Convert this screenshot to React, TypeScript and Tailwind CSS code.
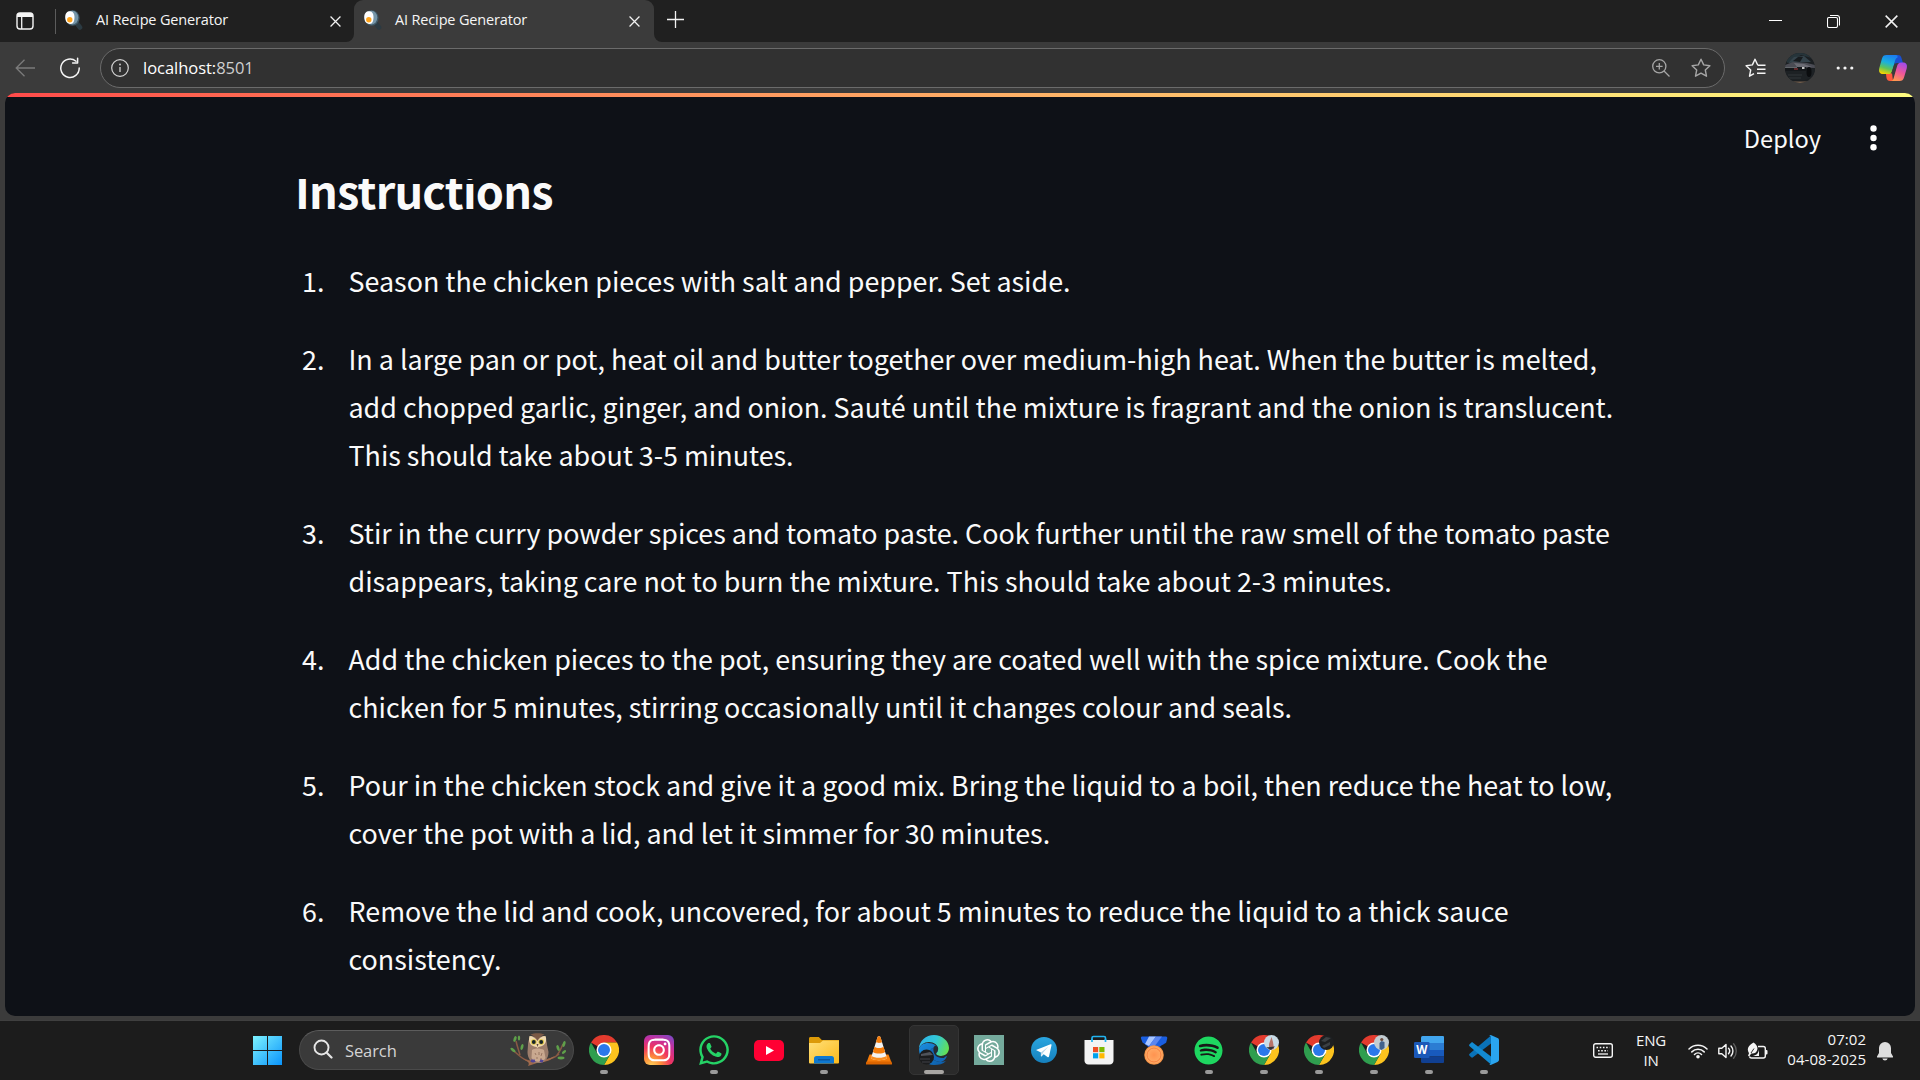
import React from "react";
import { FaSpotify, FaWhatsapp, FaInstagram } from "react-icons/fa";
import { SiOpenai } from "react-icons/si";

const steps: string[][] = [
  ["Season the chicken pieces with salt and pepper. Set aside."],
  [
    "In a large pan or pot, heat oil and butter together over medium-high heat. When the butter is melted,",
    "add chopped garlic, ginger, and onion. Sauté until the mixture is fragrant and the onion is translucent.",
    "This should take about 3-5 minutes.",
  ],
  [
    "Stir in the curry powder spices and tomato paste. Cook further until the raw smell of the tomato paste",
    "disappears, taking care not to burn the mixture. This should take about 2-3 minutes.",
  ],
  [
    "Add the chicken pieces to the pot, ensuring they are coated well with the spice mixture. Cook the",
    "chicken for 5 minutes, stirring occasionally until it changes colour and seals.",
  ],
  [
    "Pour in the chicken stock and give it a good mix. Bring the liquid to a boil, then reduce the heat to low,",
    "cover the pot with a lid, and let it simmer for 30 minutes.",
  ],
  [
    "Remove the lid and cook, uncovered, for about 5 minutes to reduce the liquid to a thick sauce",
    "consistency.",
  ],
];

function PanIcon() {
  return (
    <svg width="20" height="20" viewBox="0 0 20 20" className="block">
      <path d="M13 13.500L16 17.500" stroke="#2b3a42" strokeWidth="4.600" strokeLinecap="round" />
      <ellipse cx="8.600" cy="8" rx="7" ry="7.800" fill="#3f5967" />
      <ellipse cx="8.400" cy="7.600" rx="5.900" ry="6.900" fill="#7595a8" />
      <path d="M1.200 7C1.200 3 3.500 1 6.300 1.200C9.500 1.500 10.600 4 10.500 7C10.400 11 9.600 14 6.400 13.900C3 13.800 1.200 11 1.200 7Z" fill="#fff" />
      <circle cx="5.800" cy="9.800" r="2.700" fill="#ffa41c" />
    </svg>
  );
}

function CloseX({ size = 10 }: { size?: number }) {
  return (
    <svg width={size} height={size} viewBox="0 0 10 10" className="block">
      <path d="M.5.5l9 9M9.500.5l-9 9" stroke="#f2f2f2" strokeWidth="1.150" />
    </svg>
  );
}

function TabBar() {
  return (
    <div className="flex h-[42px] shrink-0 bg-[#202020] text-[#f5f5f5]">
      <div className="flex w-[55px] items-center pl-4">
        <svg width="18" height="18" viewBox="0 0 18 18" className="block">
          <rect x="1" y="1" width="16" height="16" rx="3" fill="none" stroke="#f5f5f5" strokeWidth="1.400" />
          <path d="M1 5V4a3 3 0 0 1 3-3h10a3 3 0 0 1 3 3v1z" fill="#f5f5f5" />
          <path d="M5.700 5v12" stroke="#f5f5f5" strokeWidth="1.300" />
        </svg>
      </div>
      <div className="mt-[9px] h-[25px] w-px bg-[#5c5c5c]" />
      <div className="flex w-[298px] items-center pb-[2px] pl-[8px]">
        <PanIcon />
        <span className="ml-[12px] flex-1 whitespace-nowrap text-[14.500px] leading-5 tracking-[-0.150px]">AI Recipe Generator</span>
        <div className="mr-[13px] pt-[3px]"><CloseX size={11} /></div>
      </div>
      <div className="relative flex w-[300px] items-center rounded-t-[9px] bg-[#3b3b3b] pb-[2px] pl-[9px]">
        <PanIcon />
        <span className="ml-[12px] flex-1 whitespace-nowrap text-[14.500px] leading-5 tracking-[-0.150px]">AI Recipe Generator</span>
        <div className="mr-[14px] pt-[3px]"><CloseX size={11} /></div>
        <svg className="absolute -left-2 bottom-0" width="8" height="8"><path d="M8 0v8H0a8 8 0 0 0 8-8z" fill="#3b3b3b" /></svg>
        <svg className="absolute -right-2 bottom-0" width="8" height="8"><path d="M0 0v8h8a8 8 0 0 1-8-8z" fill="#3b3b3b" /></svg>
      </div>
      <svg width="17" height="17" viewBox="0 0 17 17" className="ml-[13px] mt-[11px]">
        <path d="M8.500 0v17M0 8.500h17" stroke="#f2f2f2" strokeWidth="1.300" />
      </svg>
      <div className="ml-auto flex pr-[22px] pt-[15px]">
        <svg width="13" height="13" className="mr-[45px]"><path d="M0 5.500h13" stroke="#fff" /></svg>
        <svg width="13" height="13" viewBox="0 0 13 13" className="mr-[45px]">
          <path d="M3 .5h7a2.500 2.500 0 0 1 2.500 2.500v7.500" fill="none" stroke="#fff" strokeWidth="1.100" />
          <rect x=".5" y="2.500" width="10" height="10" rx="1.500" fill="none" stroke="#fff" strokeWidth="1.100" />
        </svg>
        <CloseX size={13} />
      </div>
    </div>
  );
}

const starPath = "M10 1.200l2.700 5.700 6.200.8-4.600 4.300 1.200 6.200L10 15.200l-5.500 3 1.200-6.200L1.100 7.700l6.200-.8z";

function CopilotIcon() {
  return (
    <svg width="30" height="28" viewBox="0 0 30 28" className="block">
      <defs>
        <linearGradient id="cpA" x1="0.600" y1="0" x2="0.300" y2="1">
          <stop offset="0" stopColor="#1b7ff0" /><stop offset=".4" stopColor="#19b0e0" /><stop offset=".7" stopColor="#5ec45a" /><stop offset="1" stopColor="#f5d400" />
        </linearGradient>
        <linearGradient id="cpB" x1="0.700" y1="0" x2="0.300" y2="1">
          <stop offset="0" stopColor="#a34be8" /><stop offset=".5" stopColor="#f0569a" /><stop offset="1" stopColor="#ff9a4d" />
        </linearGradient>
      </defs>
      <path d="M16 1h4c2 0 3 1 3.500 3l1.500 5h-5c-2 0-3 1-3.600 3z" fill="#1a4fd0" />
      <path d="M8 20l6-1 1 8h-3c-2 0-3-1-3.500-3z" fill="#ff5a3c" />
      <path d="M8.500 1h9c2 0 2.400 1 2 2.600C18.500 4 17.500 5 17 7L14 17.500c-.7 1.900-1.500 2.500-3.500 2.500H5C1.500 20 .5 17.500 1.300 14L4 4.500C4.700 2 6 1 8.500 1z" fill="url(#cpA)" />
      <path d="M21.500 27h-9c2 0 2.600-1 3.200-3l3.400-12c.7-2.200 1.800-3.500 4-3.500H25c3.500 0 4.500 2.500 3.700 6L26 23.500c-.7 2.500-2 3.500-4.500 3.500z" fill="url(#cpB)" />
      <path d="M16.600 9.500h2.800c-.5.700-.8 1.500-1 2.400l-2 7.500h-3.200z" fill="#3b3b3b" />
    </svg>
  );
}

function CarAvatar() {
  return (
    <svg width="30" height="30" viewBox="0 0 30 30" className="block">
      <defs><clipPath id="carc"><circle cx="15" cy="15" r="15" /></clipPath></defs>
      <g clipPath="url(#carc)">
        <rect width="30" height="30" fill="#1b1f22" />
        <path d="M0 0h30v6L16 2 2 10z" fill="#26343a" />
        <path d="M3 10L9 4l10-1 7 6z" fill="#34434b" />
        <path d="M8 8l5-4h5l-3 5z" fill="#171b1e" />
        <path d="M0 12l8-3 14 1 8 2v3l-30-1z" fill="#4b4c54" />
        <path d="M9 10l10 1 8 3H12z" fill="#6b6c74" />
        <rect x="0" y="14" width="21" height="4" fill="#15181b" />
        <path d="M0 14.500h12" stroke="#85898e" strokeWidth=".7" />
        <path d="M17 15h2.500" stroke="#fff" strokeWidth="1.400" />
        <path d="M9 16h4" stroke="#a8373a" strokeWidth="1" />
        <path d="M0 18h22l8-3v8l-10 4H0z" fill="#1d2124" />
        <ellipse cx="24" cy="19" rx="2.500" ry="5" fill="#0b0d0f" />
        <path d="M3 22h14M4 25h12" stroke="#33383c" strokeWidth=".9" />
        <path d="M4 28.500h22v2H4z" fill="#77614f" />
      </g>
    </svg>
  );
}

function Toolbar() {
  return (
    <div className="flex h-[51px] shrink-0 items-center bg-[#3b3b3b] pl-[15px] pr-[12px]">
      <svg width="20" height="18" viewBox="0 0 20 18"><path d="M9.500.8L1.200 9l8.300 8.200M1.200 9H20" fill="none" stroke="#7b7b7b" strokeWidth="1.300" /></svg>
      <svg width="22" height="22" viewBox="0 0 22 22" className="ml-[24px]">
        <path d="M17 4.200A9.200 9.200 0 1 0 20.200 11" fill="none" stroke="#f5f5f5" strokeWidth="1.500" strokeLinecap="round" />
        <path d="M18.600 1.200v4.900h-5" fill="none" stroke="#f5f5f5" strokeWidth="1.500" strokeLinecap="round" strokeLinejoin="round" />
      </svg>
      <div className="ml-[19px] flex h-[40px] w-[1625px] items-center rounded-full border border-[#6b6b6b] bg-[#313131] pl-[10px] pr-[13px]">
        <svg width="18" height="18" viewBox="0 0 18 18">
          <circle cx="9" cy="9" r="8.300" fill="none" stroke="#d4d4d4" strokeWidth="1.200" />
          <path d="M9 8v5" stroke="#d4d4d4" strokeWidth="1.300" /><circle cx="9" cy="5.500" r=".9" fill="#d4d4d4" />
        </svg>
        <span className="ml-[14px] flex-1 text-[16.500px] leading-6 tracking-[-0.030px] text-white">localhost:<span className="text-[#cfcfcf]">8501</span></span>
        <svg width="18" height="18" viewBox="0 0 18 18" className="mr-[21px]">
          <circle cx="7.300" cy="7.300" r="6.600" fill="none" stroke="#a6a6a6" strokeWidth="1.300" />
          <path d="M12 12l5.500 5.500M7.300 4v6.600M4 7.300h6.600" stroke="#a6a6a6" strokeWidth="1.300" />
        </svg>
        <svg width="20" height="20" viewBox="0 0 20 20"><path d={starPath} fill="none" stroke="#a6a6a6" strokeWidth="1.400" strokeLinejoin="round" /></svg>
      </div>
      <svg width="21" height="20" viewBox="0 0 21 20" className="ml-[20px]">
        <path d="M12.800 7.200L10 1.200 7.400 6.900 1.100 7.700 5.700 12l-1.200 6.200L9 15.700M12.800 7.200h7.700M12 11.200h8.500M12 15.200h8.500" fill="none" stroke="#f5f5f5" strokeWidth="1.400" strokeLinejoin="round" />
      </svg>
      <div className="ml-[19px]"><CarAvatar /></div>
      <svg width="18" height="4" className="ml-[21px]"><circle cx="2.200" cy="2" r="1.600" fill="#f5f5f5" /><circle cx="9" cy="2" r="1.600" fill="#f5f5f5" /><circle cx="15.800" cy="2" r="1.600" fill="#f5f5f5" /></svg>
      <div className="ml-auto"><CopilotIcon /></div>
    </div>
  );
}

function Page() {
  return (
    <div className="mx-[5px] flex h-[923px] shrink-0 flex-col overflow-hidden rounded-[10px] bg-[#0e1117] text-[#fafafa] [font-family:'Noto_Sans_CJK_SC',sans-serif]">
      <div className="h-[4px] shrink-0 bg-gradient-to-r from-[#ff4b4b] to-[#fffd80]" />
      <div className="flex h-[82px] shrink-0 items-center justify-end pr-[38px]">
        <span className="mr-[49px] text-[23.600px] leading-8">Deploy</span>
        <svg width="7" height="26" viewBox="0 0 7 26"><circle cx="3.500" cy="3.500" r="3.200" fill="#fff" /><circle cx="3.500" cy="13" r="3.200" fill="#fff" /><circle cx="3.500" cy="22.300" r="3.200" fill="#fff" /></svg>
      </div>
      <div className="flex flex-1 flex-col overflow-hidden pl-[290px]">
        <h3 className="-mt-[21px] text-[45px] font-bold leading-[64px] tracking-[-0.800px]">Instructions</h3>
        <ol className="mt-[35px] flex flex-col gap-[30px] pl-px text-[26.860px]">
          {steps.map((lines, i) => (
            <li key={i} className="flex">
              <span className="w-[52.500px] shrink-0 pl-[6px] leading-[48px]">{i + 1}.</span>
              <div className="flex flex-col">
                {lines.map((l) => (
                  <span key={l} className="whitespace-nowrap leading-[48px]">{l}</span>
                ))}
              </div>
            </li>
          ))}
        </ol>
      </div>
    </div>
  );
}

function WindowsLogo() {
  return (
    <svg width="29" height="29" viewBox="0 0 29 29" className="block">
      <defs><linearGradient id="win" x1="0" y1="0" x2="29" y2="29" gradientUnits="userSpaceOnUse"><stop stopColor="#7df3ff" /><stop offset="1" stopColor="#0a94fb" /></linearGradient></defs>
      <path d="M0 0h14v14H0zM15 0h14v14H15zM0 15h14v14H0zM15 15h14v14H15z" fill="url(#win)" />
    </svg>
  );
}

function Owl() {
  return (
    <svg width="56" height="34" viewBox="0 0 56 34" className="block">
      <path d="M2 17C8 20 11 27 20 28c12 1 24-2 29-7M6 8c1 5 3 10 4 14M45 24c3-2 6-8 8-13" fill="none" stroke="#8a5a44" strokeWidth="1.500" />
      <path d="M13 26c8 4 20 3 32-3-4 5-11 6-18 7l-9 3c1-2 1-3 0-4z" fill="#a06a4c" />
      <g fill="#5fa04a">
        <ellipse cx="5" cy="6" rx="1.400" ry="3" transform="rotate(20 5 6)" /><ellipse cx="3" cy="17" rx="1.400" ry="3" transform="rotate(-50 3 17)" />
        <ellipse cx="9" cy="5" rx="1.200" ry="2.500" /><ellipse cx="12" cy="14" rx="1.400" ry="3" transform="rotate(15 12 14)" />
        <ellipse cx="48" cy="15" rx="1.400" ry="3" transform="rotate(-20 48 15)" /><ellipse cx="54" cy="11" rx="1.400" ry="3" transform="rotate(15 54 11)" />
        <ellipse cx="51" cy="25" rx="1.400" ry="3.500" transform="rotate(90 51 25)" /><ellipse cx="54" cy="19" rx="1.200" ry="2.500" transform="rotate(50 54 19)" />
      </g>
      <path d="M18 12c0-3 1-7 3-9 3 1 10 1 13 0 2 3 3 6 3 9l1.500 7c0 7-4.500 11-8.500 11h-5c-4 0-7.500-5-7.500-11z" fill="#9c7d6b" />
      <path d="M22 17c3-2 8-2 12 0l1.500 8c-2.500 5-11 5-14 0z" fill="#c9a88f" />
      <path d="M25 20l1 2m3-3v3m3-2l-1 3m-4 1v2m4-1v2" stroke="#8d6a55" strokeWidth=".8" />
      <path d="M19.500 3c3 0 6 2 8 5C29 5 32 3 35.500 3c1.500 4 .500 8-3.500 10-2 1-3 0-4.500 2-1.500-2-3-1-4.500-2-4-2-4.500-6-3.500-10z" fill="#f0d9ae" />
      <path d="M20.500 1.500c3 1 5.500 3 7 6 1.500-3 4-5 7-6-4-1.600-10-1.600-14 0z" fill="#7b5945" />
      <circle cx="23.800" cy="9" r="2.800" fill="#d9c23f" /><circle cx="31.200" cy="9" r="2.800" fill="#d9c23f" />
      <circle cx="23.800" cy="9" r="1.900" fill="#16232a" /><circle cx="31.200" cy="9" r="1.900" fill="#16232a" />
      <path d="M26.500 11h2l-1 3z" fill="#5b4538" />
      <path d="M21 29l1-2 1 2 1-2 1 2M30 29l1-2 1 2 1-2" stroke="#4a3f99" strokeWidth="1.200" fill="none" />
    </svg>
  );
}

function Chrome({ badge }: { badge?: React.ReactNode }) {
  return (
    <svg width="30" height="30" viewBox="0 0 30 30" className="block">
      <path d="M15 15L2 7.500A15 15 0 0 1 28 7.500H15z" fill="#e33b2e" />
      <path d="M28 7.500A15 15 0 0 1 15 30l6.500-11.200L15 7.500z" fill="#fcc31e" />
      <path d="M2 7.500A15 15 0 0 0 15 30l6.500-11.200L15 20 8.500 18.700z" fill="#2f9e4f" />
      <circle cx="15" cy="15" r="7.500" fill="#fff" />
      <circle cx="15" cy="15" r="6" fill="#2a78ea" />
      {badge}
    </svg>
  );
}

function Edge() {
  return (
    <svg width="30" height="30" viewBox="0 0 30 30" className="block">
      <defs>
        <linearGradient id="e1" x1="0" y1=".3" x2="1" y2=".6"><stop stopColor="#2fb4e8" /><stop offset=".5" stopColor="#32c8d8" /><stop offset="1" stopColor="#64e052" /></linearGradient>
        <linearGradient id="e2" x1="0" y1="0" x2="1" y2="1"><stop stopColor="#1b8fe0" /><stop offset="1" stopColor="#0c59a4" /></linearGradient>
      </defs>
      <path d="M0 14C0 6 7 0 15 0s15 6 15 13c0 5-4 8-8 8-3 0-5-1-5-2s2-2 2-5c0-4-4-7-9-7-5 0-9 3-10 7z" fill="url(#e1)" />
      <path d="M0 14c1-4 5-6 9-6 6 0 10 3 10 7-1-3-8-4-8 3 0 5 5 9 11 9 2 0 4-1 5-1-3 3-7 4-12 4C7 30 0 23 0 14z" fill="url(#e2)" />
      <path d="M11 18c0-7 7-6 8-3 0 2-2 3-2 4s2 3 6 3c3 0 4-1 5-1-1 3-3 5-6 6-6 0-11-4-11-9z" fill="#1267b8" />
      <path d="M16 10.500c3 .5 4 3 2.600 5.500-1 1.500-1.600 2-1.600 3 1 2 6 3 10.500 1L25 23c-6 0-9-2-10-5-1-3-1-6 1-7.500z" fill="#262c30" />
      <circle cx="7.500" cy="22" r="7.500" fill="#1b1c1e" />
      <path d="M2 19l9-2 3 3-12 1z" fill="#50535a" /><path d="M1 24h10M3 27h8" stroke="#4a4d50" strokeWidth=".8" />
    </svg>
  );
}

function Explorer() {
  return (
    <svg width="30" height="27" viewBox="0 0 30 27" className="block">
      <defs><linearGradient id="fx" x1="0" y1="0" x2="1" y2="1"><stop stopColor="#ffe07a" /><stop offset="1" stopColor="#fbb91b" /></linearGradient></defs>
      <path d="M0 1.500C0 .6.600 0 1.500 0h8.300l3 3H30v5H0z" fill="#dc9a08" />
      <path d="M0 6h11l3-2.500h16V25.500a1 1 0 0 1-1 1H1a1 1 0 0 1-1-1z" fill="url(#fx)" />
      <path d="M5 26.500V21.500A2.500 2.500 0 0 1 7.500 19h15a2.500 2.500 0 0 1 2.500 2.500v5z" fill="#0e78d0" />
      <path d="M9 22.800h12" stroke="#0a4f94" strokeWidth="1.200" />
    </svg>
  );
}

function Vlc() {
  return (
    <svg width="26" height="29" viewBox="0 0 26 29" className="block">
      <path d="M3.500 18.500h19L26 28H0z" fill="#f57c0a" />
      <path d="M0 27l.6-1.600h24.800L26 28.500H0z" fill="#dc6500" />
      <path d="M11.500 1.200c.3-1.400 2.700-1.400 3 0L21 22c-2 3-14 3-16 0z" fill="#f3f3f3" />
      <path d="M11.500 1.200c.3-1.400 2.700-1.400 3 0L16 6c-1 1.200-5 1.200-6 0z" fill="#f57c0a" />
      <path d="M8.500 10.800c2 1.600 7 1.600 9 0l1.600 5.200c-2.600 2-9.600 2-12.200 0z" fill="#f57c0a" />
      <path d="M5.600 20L5 22c2 3 14 3 16 0l-.6-2c-3 2.400-11.800 2.400-14.800 0z" fill="#f98d1f" />
    </svg>
  );
}

function Telegram() {
  return (
    <svg width="26" height="26" viewBox="0 0 26 26" className="block">
      <defs><linearGradient id="tg" x1="0" y1="0" x2="0" y2="1"><stop stopColor="#2aa6e0" /><stop offset="1" stopColor="#1680bd" /></linearGradient></defs>
      <circle cx="13" cy="13" r="13" fill="url(#tg)" />
      <path d="M5 13L19.500 7.300c.7-.2 1.200.2 1 1L18 19.500c-.2.8-.8 1-1.500.6L12.700 17.300l-2 2c-.5.400-.8.200-.8-.4v-3.400z" fill="#fff" />
      <path d="M9.900 15.400l7.500-5.800-5.600 6.300-1.100 3.400z" fill="#b9d5e8" />
    </svg>
  );
}

function Store() {
  return (
    <svg width="30" height="30" viewBox="0 0 30 30" className="block">
      <path d="M8 6V3a1.500 1.500 0 0 1 1.500-1.500H20A1.500 1.500 0 0 1 21.500 3v3" fill="none" stroke="#22b4f0" strokeWidth="1.700" />
      <path d="M.5 5h29v20a4 4 0 0 1-4 4.500h-21a4 4 0 0 1-4-4.500z" fill="#f3f3f3" />
      <path d="M8 7V4M21.500 7V4" stroke="#22b4f0" strokeWidth="1.700" />
      <path d="M9 12h5.200v5.200H9z" fill="#ef4e23" /><path d="M15.300 12h5.200v5.200h-5.200z" fill="#7db900" />
      <path d="M9 18.200h5.200v5.200H9z" fill="#00a2ed" /><path d="M15.300 18.200h5.200v5.200h-5.200z" fill="#feb800" />
    </svg>
  );
}

function Medal() {
  return (
    <svg width="28" height="30" viewBox="0 0 28 30" className="block">
      <defs>
        <radialGradient id="md"><stop stopColor="#ff9350" /><stop offset=".8" stopColor="#ffab66" /><stop offset="1" stopColor="#f08a3c" /></radialGradient>
      </defs>
      <path d="M2 1.500h24c1 0 1.500 1 1.200 2l-1 4c-2 2-6 3-7 5H9c-2-2-4-3-6.500-5l-1.500-4c-.3-1 0-2 1-2z" fill="#1a5ee0" />
      <path d="M9 1.500h7L9 11 5 9z" fill="#a9c6ff" /><path d="M16 1.500h6L14 12l-5-1z" fill="#5b86f0" />
      <circle cx="14" cy="20" r="9.800" fill="url(#md)" /><circle cx="14" cy="20" r="7" fill="none" stroke="#f57f3e" strokeWidth="1" />
    </svg>
  );
}

function Word() {
  return (
    <svg width="30" height="28" viewBox="0 0 30 28" className="block">
      <path d="M7 1.500A1.500 1.500 0 0 1 8.500 0H29a1 1 0 0 1 1 1v6H7z" fill="#41a5ee" /><path d="M7 7h23v7H7z" fill="#2b7cd3" />
      <path d="M7 14h23v6.500H7z" fill="#185abd" /><path d="M7 20.500h23V26a1 1 0 0 1-1 1H8.500A1.500 1.500 0 0 1 7 25.500z" fill="#103f91" />
      <rect y="6" width="15.500" height="16" rx="1.300" fill="#1b58b8" />
      <text x="7.700" y="18" fontSize="11.500" fontWeight="700" textAnchor="middle" fill="#fff" fontFamily="Open Sans, sans-serif">W</text>
    </svg>
  );
}

function VsCode() {
  return (
    <svg width="30" height="30" viewBox="0 0 30 30" className="block">
      <path d="M22 .5L22 8.500 4 22.300c-.6.500-1.300.4-1.800 0L.6 20.800c-.7-.6-.7-1.500 0-2.100z" fill="#0a72b8" />
      <path d="M22 29.500v-8L4 7.700c-.6-.5-1.300-.4-1.800 0L.6 9.200c-.7.6-.7 1.500 0 2.100z" fill="#138bd2" />
      <path d="M21.500 30c-.8 0-1.300-.3-1.800-.8 1 .6 2.300 0 2.300-1.200V2C22 .800 20.700.2 19.700.8c.6-.8 1.600-1 2.600-.6L28.500 3c.9.400 1.500 1.200 1.500 2.200v19.600c0 1-.6 1.800-1.500 2.200l-6.200 2.800c-.2.100-.5.200-.8.200z" fill="#2aa5f0" />
    </svg>
  );
}

function Instagram() {
  return (
    <div className="flex h-[30px] w-[30px] items-center justify-center rounded-[6px] bg-[radial-gradient(circle_at_25%_105%,#ffd85f_0%,#fd8d3a_25%,#f0355f_50%,#c72f9c_72%,#6a4fd0_100%)]">
      <FaInstagram size={26} color="#fff" />
    </div>
  );
}

const b1 = (<g><circle cx="22.500" cy="7.500" r="7.500" fill="#c9dbe6" /><path d="M20 15V9l2.500-7 1.500 5 1 7z" fill="#b8746a" /><path d="M17 12.500l9-1-4 3.500z" fill="#2b3038" /></g>);
const b2 = (<g><circle cx="22.500" cy="7.500" r="7.500" fill="#1d1f21" /><path d="M17 6l5-4 5 1-6 4zM18 11l8-4v3l-6 3z" fill="#3c4043" /></g>);
const b3 = (<g><circle cx="22.500" cy="7.500" r="7.500" fill="#c3cdd2" /><path d="M20.500 14V8l2-2 3 1v6l-3 2z" fill="#41618c" /><circle cx="22.800" cy="4.500" r="1.600" fill="#6a4a3c" /></g>);

const apps: { icon: React.ReactNode; mark?: "dot" | "bar" }[] = [
  { icon: <Chrome />, mark: "dot" },
  { icon: <Instagram /> },
  { icon: <FaWhatsapp size={34} color="#25d366" className="shrink-0" />, mark: "dot" },
  { icon: (<svg width="30" height="21" viewBox="0 0 30 21"><rect width="30" height="21" rx="5" fill="#ff0033" /><path d="M12 6l8 4.500-8 4.500z" fill="#fff" /></svg>) },
  { icon: <Explorer />, mark: "dot" },
  { icon: <Vlc /> },
  { icon: <Edge />, mark: "bar" },
  { icon: (<div className="flex h-[30px] w-[30px] items-center justify-center bg-[#74aa9c]"><SiOpenai size={23} color="#fff" /></div>) },
  { icon: <Telegram /> },
  { icon: <Store /> },
  { icon: <Medal /> },
  { icon: (<div className="rounded-full bg-[#181818]"><FaSpotify size={29} color="#1ed760" /></div>), mark: "dot" },
  { icon: <Chrome badge={b1} />, mark: "dot" },
  { icon: <Chrome badge={b2} />, mark: "dot" },
  { icon: <Chrome badge={b3} />, mark: "dot" },
  { icon: <Word />, mark: "dot" },
  { icon: <VsCode />, mark: "dot" },
];

function Tray() {
  return (
    <div className="ml-auto flex items-center pr-[27px] text-[15px] leading-5 text-[#f5f5f5]">
      <svg width="20" height="15" viewBox="0 0 20 15" className="mr-[23px]">
        <rect x=".7" y=".7" width="18.600" height="13.600" rx="2" fill="none" stroke="#f5f5f5" strokeWidth="1.400" />
        <path d="M3.500 4.500h13M5 7.800h10" stroke="#f5f5f5" strokeWidth="1.600" strokeDasharray="1.600 1.600" /><path d="M5 11h10" stroke="#f5f5f5" strokeWidth="1.300" />
      </svg>
      <div className="mr-[22px] w-[30px] whitespace-nowrap pb-[2px] text-center tracking-[-0.200px]">ENG<br />IN</div>
      <svg width="20" height="16" viewBox="0 0 20 16" className="mr-[10px]">
        <g fill="none" stroke="#f5f5f5" strokeWidth="1.500" strokeLinecap="round"><path d="M1 6a12.800 12.800 0 0 1 18 0M3.800 8.900a8.800 8.800 0 0 1 12.400 0M6.500 11.500a5 5 0 0 1 7 0" /></g>
        <circle cx="10" cy="13.700" r="1.800" fill="#f5f5f5" />
      </svg>
      <svg width="20" height="18" viewBox="0 0 20 18" className="mr-[9px]">
        <path d="M.8 6.300h3L8 2.500v13l-4.200-3.800h-3z" fill="none" stroke="#f5f5f5" strokeWidth="1.400" strokeLinejoin="round" />
        <path d="M10.500 6.300a4 4 0 0 1 0 5.400M13 4a7.500 7.500 0 0 1 0 10" fill="none" stroke="#f5f5f5" strokeWidth="1.400" strokeLinecap="round" />
        <path d="M15.600 1.800a11 11 0 0 1 0 14.400" fill="none" stroke="#5c5c5c" strokeWidth="1.400" strokeLinecap="round" />
      </svg>
      <svg width="21" height="18" viewBox="0 0 21 18" className="mr-[20px]">
        <path d="M11 4.500h5.300a2 2 0 0 1 2 2v7.500a2 2 0 0 1-2 2H4.500a2 2 0 0 1-2-1.500" fill="none" stroke="#f5f5f5" strokeWidth="1.400" />
        <path d="M18.500 8h1a1 1 0 0 1 1 1v2.500a1 1 0 0 1-1 1h-1z" fill="#f5f5f5" />
        <path d="M6.500.5c3 2 4.600 4.500 3.700 7.500-.8 2.600-3 4-6 3.500l-2 3-1.200-.8 1-2.400C-.3 7.500.5 4 6.500.5z" fill="#f5f5f5" />
        <path d="M4 11L7 6.500" stroke="#1c1c1c" strokeWidth=".9" /><path d="M12 7.500v6.500H6C10 13 11.500 11 12 7.500z" fill="#f5f5f5" />
      </svg>
      <div className="mr-[11px] flex w-[78px] flex-col items-end whitespace-nowrap pb-[4px] text-[15px] tracking-[0.040px]"><div>07:02</div><div>04-08-2025</div></div>
      <svg width="16" height="20" viewBox="0 0 16 20" className="mt-[3px]">
        <path d="M8 0a6 6 0 0 1 6 6v5l2 3.500c.2.600 0 1-.7 1H.7c-.7 0-.9-.4-.7-1L2 11V6a6 6 0 0 1 6-6zM5.300 16.500h5.400a2.800 2.800 0 0 1-5.400 0z" fill="#dedede" />
      </svg>
    </div>
  );
}

function Taskbar() {
  return (
    <div className="flex h-[60px] shrink-0 border-t border-[#3f3f3f] bg-[#1c1c1c] pl-[253px]">
      <div className="flex w-[46px] items-center"><WindowsLogo /></div>
      <div className="mt-[9px] flex h-[40px] w-[275px] items-center rounded-full border border-[#4a4a4a] border-t-[#5c5c5c] bg-[#3a3a3a] pl-[13px] pr-[7px]">
        <svg width="20" height="20" viewBox="0 0 20 20" className="mb-[2px]"><circle cx="8.500" cy="8.500" r="7" fill="none" stroke="#e6e6e6" strokeWidth="1.900" /><path d="M13.500 13.500l5 5" stroke="#e6e6e6" strokeWidth="2.200" strokeLinecap="round" /></svg>
        <span className="ml-[12px] flex-1 pt-px text-[16.500px] leading-6 text-[#d4d4d4] tracking-[-0.100px]">Search</span>
        <Owl />
      </div>
      <div className="ml-[2px] flex">
        {apps.map((a, i) => (
          <div key={i} className="flex w-[55px] justify-center pt-[4px]">
            <div className={a.mark === "bar" ? "relative flex h-[50px] w-[50px] items-center justify-center rounded-[5px] border border-[#343434] bg-[#2a2a2a]" : "relative flex h-[50px] w-[50px] items-center justify-center"}>
              {a.icon}
              {a.mark === "dot" && <div className="absolute bottom-[1px] left-[21px] h-[4px] w-[8px] rounded-full bg-[#9a9a9a]" />}
              {a.mark === "bar" && <div className="absolute bottom-0 left-[14px] h-[4px] w-[20px] rounded-full bg-[#a8a6a3]" />}
            </div>
          </div>
        ))}
      </div>
      <Tray />
    </div>
  );
}

export default function App() {
  return (
    <div className="flex h-[1080px] w-[1920px] flex-col overflow-hidden bg-[#3b3b3b] [font-family:'Open_Sans',sans-serif]">
      <TabBar />
      <Toolbar />
      <Page />
      <div className="h-[4px] shrink-0" />
      <Taskbar />
    </div>
  );
}
